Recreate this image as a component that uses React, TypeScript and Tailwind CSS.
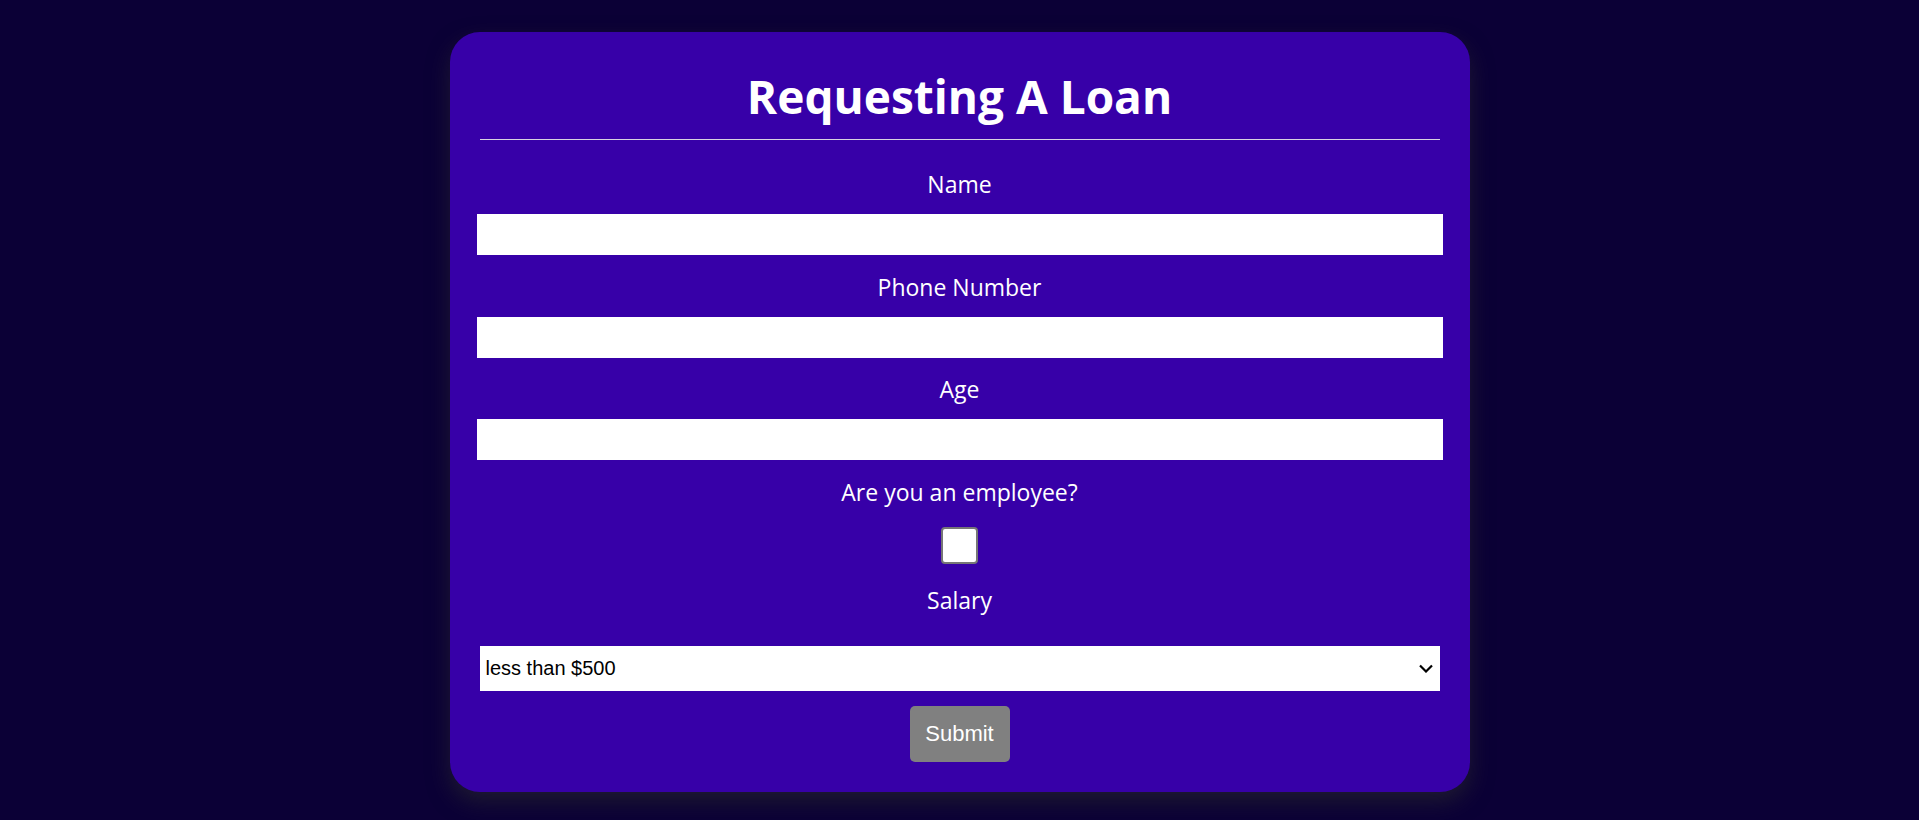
const LABEL = 'block text-center text-white text-[23px] leading-[24px]';
const INPUT = 'block w-[966px] h-[41px] bg-white border-0 outline-none px-1 mx-auto';

function Field({ label, first }: { label: string; first?: boolean }) {
  return (
    <>
      <label className={`${LABEL} ${first ? 'mt-[32px]' : 'mt-[19.5px]'}`}>{label}</label>
      <input type="text" className={`${INPUT} mt-[18px]`} />
    </>
  );
}

export default function App() {
  return (
    <div className="min-h-[820px] w-full bg-[#0b0036] pt-[32px] font-['Open_Sans',sans-serif]">
      <form className="mx-auto flex w-[1020px] flex-col rounded-[30px] bg-[#3700a8] px-[27px] pt-[40px] pb-[30px] shadow-[0_10px_22px_rgba(45,45,45,0.55)]">
        <h1 className="text-center text-[46px] font-bold leading-[48px] text-white">Requesting A Loan</h1>
        <hr className="mx-[3px] mt-[19px] border-0 border-t border-[#d6d3e0]" />

        <Field label="Name" first />
        <Field label="Phone Number" />
        <Field label="Age" />

        <label className={`${LABEL} mt-[19.5px]`}>Are you an employee?</label>
        <input
          type="checkbox"
          className="mx-auto mt-[23px] block h-[37px] w-[37px] appearance-none rounded-[4px] border-2 border-[#767676] bg-white"
        />

        <label className={`${LABEL} mt-[24px]`}>Salary</label>
        <div className="relative mx-[3px] mt-[34px]">
          <select className="block h-[45px] w-full appearance-none border-0 bg-white pl-[6px] font-['Liberation_Sans',Arial,sans-serif] text-[20px] text-black outline-none">
            <option>less than $500</option>
            <option>$500 - $1000</option>
            <option>more than $1000</option>
          </select>
          <svg
            className="pointer-events-none absolute right-[7px] top-[18px]"
            width="14"
            height="9"
            viewBox="0 0 14 9"
            fill="none"
          >
            <path d="M1 1.5 L7 7.5 L13 1.5" stroke="#000" strokeWidth="2.2" />
          </svg>
        </div>

        <button
          type="button"
          className="mx-auto mt-[15px] h-[56px] w-[100px] rounded-[5px] bg-[#808080] font-['Liberation_Sans',Arial,sans-serif] text-[22px] text-white"
        >
          Submit
        </button>
      </form>
    </div>
  );
}
